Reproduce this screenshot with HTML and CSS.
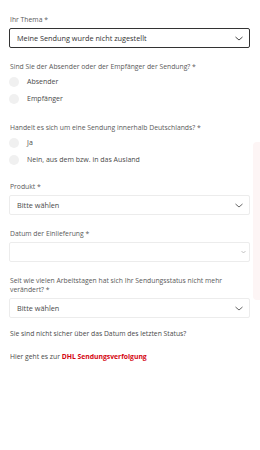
FILE: index.html
```html
<!DOCTYPE html>
<html lang="de">
<head>
    <meta charset="UTF-8">
    <meta name="viewport" content="width=device-width, initial-scale=1.0">
    <title>Kontakt</title>
    <link rel="stylesheet" href="styles.css">
</head>
<body>

<form class="contact-form">
    <!-- Thema -->
    <div class="field">
        <label class="field-label">Ihr Thema *</label>
        <div class="select select-active">
            <span>Meine Sendung wurde nicht zugestellt</span>
            <svg class="chevron" width="8" height="5" viewBox="0 0 8 5"><path d="M0.5 1l3.5 3l3.5-3" fill="none" stroke="#333" stroke-width="0.9"/></svg>
        </div>
    </div>

    <!-- Absender / Empfaenger -->
    <div class="field radio-group">
        <p class="field-label radio-label">Sind Sie der Absender oder der Empfänger der Sendung? *</p>
        <div class="radio-row"><span class="radio"></span>Absender</div>
        <div class="radio-row"><span class="radio"></span>Empfänger</div>
    </div>

    <!-- Inland / Ausland -->
    <div class="field">
        <p class="field-label radio-label">Handelt es sich um eine Sendung innerhalb Deutschlands? *</p>
        <div class="radio-row"><span class="radio"></span>Ja</div>
        <div class="radio-row"><span class="radio"></span>Nein, aus dem bzw. in das Ausland</div>
    </div>

    <div class="field">
        <label class="field-label">Produkt *</label>
        <div class="select">
            <span>Bitte wählen</span>
            <svg class="chevron" width="8" height="5" viewBox="0 0 8 5"><path d="M0.5 1l3.5 3l3.5-3" fill="none" stroke="#555" stroke-width="0.9"/></svg>
        </div>
    </div>

    <div class="field">
        <label class="field-label">Datum der Einlieferung *</label>
        <div class="select select-date">
            <span></span>
            <svg class="chevron" width="5" height="4" viewBox="0 0 5 4"><path d="M0.5 1l2 2l2-2" fill="none" stroke="#aaa" stroke-width="0.7"/></svg>
        </div>
    </div>

    <div class="field field-last">
        <label class="field-label">Seit wie vielen Arbeitstagen hat sich Ihr Sendungsstatus nicht mehr verändert? *</label>
        <div class="select">
            <span>Bitte wählen</span>
            <svg class="chevron" width="8" height="5" viewBox="0 0 8 5"><path d="M0.5 1l3.5 3l3.5-3" fill="none" stroke="#555" stroke-width="0.9"/></svg>
        </div>
    </div>

    <p class="hint">Sie sind nicht sicher über das Datum des letzten Status?</p>
    <p class="hint">Hier geht es zur <a href="#" class="track-link">DHL Sendungsverfolgung</a></p>
</form>

<!-- Feedback tab cut off at the right edge -->
<div class="side-tab"></div>

</body>
</html>
```

FILE: styles.css
```css
body {
    margin: 0;
    font-family: 'Open Sans', 'Noto Sans', sans-serif;
    color: #555;
    background-color: #fff;
}

.contact-form {
    padding: 15px 10px 0 9px;
}

.field {
    margin-bottom: 14px;
}

.radio-group {
    margin-bottom: 16px;
}

.field-last {
    margin-bottom: 11px;
}

.field-label {
    display: block;
    margin: 0 0 4px 1px;
    font-size: 6.8px;
    line-height: 9px;
    color: #5a5a5a;
}

.radio-label {
    margin-bottom: 2px;
}

.select {
    height: 18px;
    display: flex;
    align-items: center;
    justify-content: space-between;
    padding: 0 6px 0 7px;
    border: 1px solid #ececec;
    border-radius: 2px;
    font-size: 7.3px;
    color: #4a4a4a;
}

.select-active {
    border-color: #333;
    color: #333;
}

.select-date {
    padding-right: 3px;
}

.radio-row {
    display: flex;
    align-items: center;
    height: 17px;
    font-size: 7px;
    color: #4a4a4a;
}

.radio {
    width: 10px;
    height: 10px;
    border-radius: 50%;
    background-color: #f0f0f0;
    margin-right: 8px;
}

.hint {
    margin: 0 0 14px 1px;
    font-size: 6.8px;
    line-height: 9px;
    color: #4a4a4a;
}

.track-link {
    color: #d40511;
    font-weight: 700;
    text-decoration: none;
}

.side-tab {
    position: absolute;
    top: 142px;
    right: 0;
    width: 7px;
    height: 158px;
    background-color: #fdf5f5;
    border-radius: 4px 0 0 4px;
}
```
